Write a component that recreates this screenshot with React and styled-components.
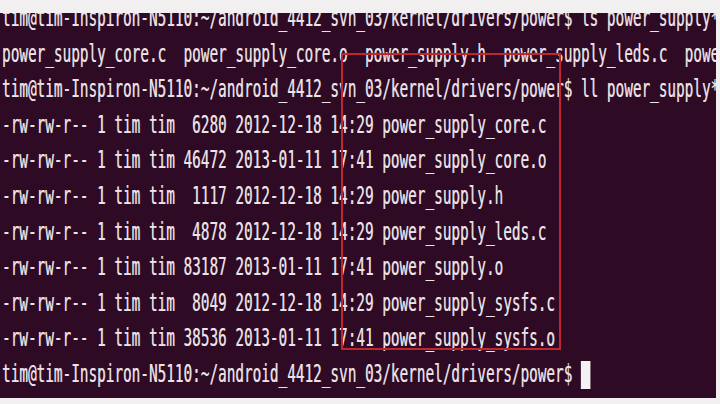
import styled, { createGlobalStyle } from 'styled-components'

const GlobalStyle = createGlobalStyle`
  html, body {
    margin: 0;
    padding: 0;
    background: #f2eff1;
  }
`;

const Frame = styled.div`
  width: 720px;
  height: 404px;
  box-sizing: border-box;
  padding: 13px 4px 6px 0;
  background: #f2eff1;
  display: flex;
  overflow: hidden;
`;

const Terminal = styled.div`
  position: relative;
  flex: 1;
  background: #2e0a24;
  overflow: hidden;
`;

const Lines = styled.div`
  margin-top: -12px;
  padding-left: 2px;
  display: flex;
  flex-direction: column;
`;

const Line = styled.div`
  font-family: 'DejaVu Sans Mono', monospace;
  font-size: 24px;
  line-height: 35.6px;
  height: 35.6px;
  color: #ece3e8;
  white-space: pre;
  text-shadow: 0.6px 0 0 rgba(236, 227, 232, 0.55);
  transform: scaleX(0.598);
  transform-origin: left center;
`;

const Cursor = styled.span`
  display: inline-block;
  width: 16px;
  height: 28px;
  vertical-align: -7px;
  background: #f4f1f3;
`;

const Highlight = styled.div`
  position: absolute;
  left: 341px;
  top: 40px;
  width: 216px;
  height: 293px;
  border: 2px solid #c0262f;
  pointer-events: none;
`;

const prompt = 'tim@tim-Inspiron-N5110:~/android_4412_svn_03/kernel/drivers/power$ '

const rows = [
  '-rw-rw-r-- 1 tim tim  6280 2012-12-18 14:29 power_supply_core.c',
  '-rw-rw-r-- 1 tim tim 46472 2013-01-11 17:41 power_supply_core.o',
  '-rw-rw-r-- 1 tim tim  1117 2012-12-18 14:29 power_supply.h',
  '-rw-rw-r-- 1 tim tim  4878 2012-12-18 14:29 power_supply_leds.c',
  '-rw-rw-r-- 1 tim tim 83187 2013-01-11 17:41 power_supply.o',
  '-rw-rw-r-- 1 tim tim  8049 2012-12-18 14:29 power_supply_sysfs.c',
  '-rw-rw-r-- 1 tim tim 38536 2013-01-11 17:41 power_supply_sysfs.o',
]

export default function App() {
  return (
    <>
      <GlobalStyle />
      <Frame>
        <Terminal>
          <Lines>
            <Line>{prompt}ls power_supply*</Line>
            <Line>power_supply_core.c  power_supply_core.o  power_supply.h  power_supply_leds.c  power_supply.o</Line>
            <Line>{prompt}ll power_supply*</Line>
            {rows.map((r) => (
              <Line key={r}>{r}</Line>
            ))}
            <Line>{prompt}<Cursor /></Line>
          </Lines>
          <Highlight />
        </Terminal>
      </Frame>
    </>
  )
}
